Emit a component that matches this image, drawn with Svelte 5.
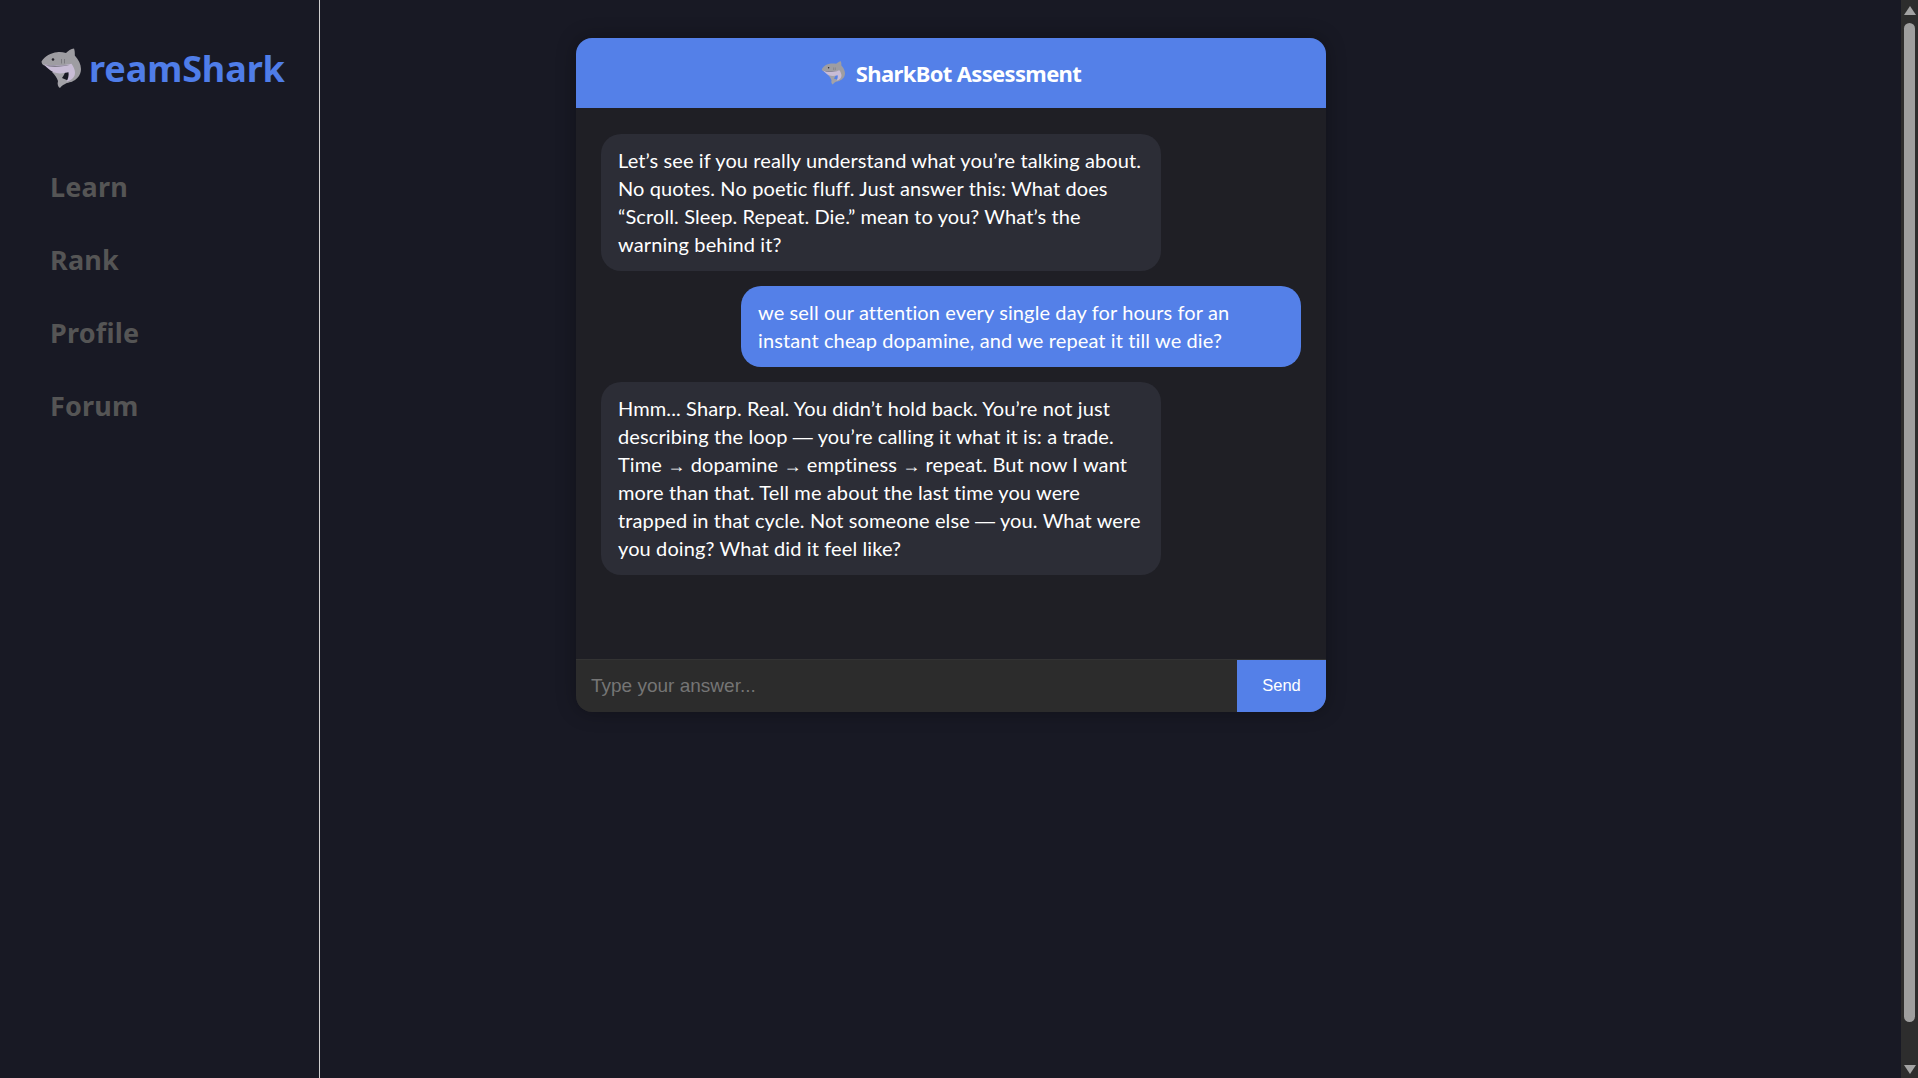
<script>
  const nav = ['Learn', 'Rank', 'Profile', 'Forum'];
</script>

{#snippet shark(cls)}
  <svg class={cls} viewBox="0 0 41 41" aria-hidden="true">
    <path d="M12 24c3 3 5 6 6 9-1 3 0 6 2 7 2-3 6-5 13-7-5-.5-8-1.500-11-3 2-3 3-5 4-8z" fill="#a3a2a8"/>
    <path d="M1.500 13.500C5 8 11 4.700 17 4.200c3-.3 6-.1 9 .7 2-2 5-4 8-4.400.7 2 1 4.500.8 7C38.500 11.500 41 16.500 41 21c0 6-4 11-10 13-2 .6-3.500.6-5 .2 4-2 7-5 7-9 0-2-.5-4-1.500-7.200C24 19 12 19 4.500 17.500 2.500 17 1.500 15 1.500 13.500z" fill="#9e9da2"/>
    <path d="M4 16.500c8 1.300 19 1.200 27.500-.7 2 3 3.500 6 3.500 9 0 4-3 7.500-8.500 9 1.500-3 2.500-6 2-9.500-6 1.500-11 1.500-15 0-3.500-1.800-7-4.800-9.500-7.800z" fill="#c8bcd6"/>
    <path d="M5 16.800c7 1.200 16 1.200 25 0-7 2-15 2.700-21 1.700z" fill="#7d7a88"/>
    <circle cx="13" cy="11.500" r="1.300" fill="#26242c"/>
    <path d="M21.500 11v4.500M24.500 11v4.500" stroke="#7c7b81" stroke-width="1"/>
  </svg>
{/snippet}

<div class="page">
  <aside class="sidebar">
    <div class="logo">
      {@render shark('logo-shark')}
      <span>reamShark</span>
    </div>
    <nav class="nav">
      {#each nav as item}
        <a href="#top">{item}</a>
      {/each}
    </nav>
  </aside>

  <main class="main">
    <section class="card">
      <header class="card-head">
        {@render shark('head-shark')}
        <h1>SharkBot Assessment</h1>
      </header>
      <div class="messages">
        <div class="msg bot">Let’s see if you really understand what you’re talking about. No quotes. No poetic fluff. Just answer this: What does “Scroll. Sleep. Repeat. Die.” mean to you? What’s the warning behind it?</div>
        <div class="msg user">we sell our attention every single day for hours for an instant cheap dopamine, and we repeat it till we die?</div>
        <div class="msg bot">Hmm... Sharp. Real. You didn’t hold back. You’re not just describing the loop <span class="dash">—</span> you’re calling it what it is: a trade. Time <span class="sym">→</span> dopamine <span class="sym">→</span> emptiness <span class="sym">→</span> repeat. But now I want more than that. Tell me about the last time you were trapped in that cycle. Not someone else <span class="dash">—</span> you. What were you doing? What did it feel like?</div>
      </div>
      <form class="composer">
        <input type="text" placeholder="Type your answer..." />
        <button type="button">Send</button>
      </form>
    </section>
  </main>

  <div class="scrollbar" aria-hidden="true">
    <span class="arrow up"></span>
    <span class="thumb"></span>
    <span class="arrow down"></span>
  </div>
</div>

<style>
  :global(body) {
    margin: 0;
    background: #181924;
    overflow: hidden;
  }
  .page {
    display: flex;
    height: 1078px;
    background: #181924;
    color: #fff;
    font-family: "Lato", "Open Sans", sans-serif;
  }
  .sidebar {
    box-sizing: border-box;
    width: 320px;
    flex: none;
    border-right: 1px solid #d0d0d0;
    padding: 40px 0 0 40px;
  }
  .logo {
    display: flex;
    align-items: center;
    gap: 8px;
    height: 56px;
    color: #4f7de8;
    font-family: "Noto Sans", sans-serif;
    font-size: 36px;
    font-weight: 700;
    letter-spacing: -0.1px;
  }
  .logo svg, .card-head svg {
    filter: blur(0.3px);
  }
  .logo-shark {
    width: 41px;
    height: 41px;
    flex: none;
  }
  .head-shark {
    width: 24px;
    height: 24px;
    flex: none;
  }
  .nav {
    display: flex;
    flex-direction: column;
    gap: 33px;
    margin-top: 71px;
    padding-left: 10px;
  }
  .nav a {
    height: 40px;
    line-height: 40px;
    color: #555;
    font-family: "Noto Sans", sans-serif;
    font-size: 27px;
    font-weight: 700;
    letter-spacing: 0.2px;
    text-decoration: none;
  }
  .main {
    flex: 1;
    padding: 38px 0 0 256px;
    min-width: 0;
  }
  .card {
    display: flex;
    flex-direction: column;
    width: 750px;
    height: 674px;
    border-radius: 16px;
    overflow: hidden;
    background: #1f1f25;
    box-shadow: 0 0 20px rgba(0, 0, 0, 0.3);
  }
  .card-head {
    display: flex;
    align-items: center;
    justify-content: center;
    gap: 10px;
    flex: none;
    height: 70px;
    background: #5480e8;
  }
  h1 {
    margin: 0 0 0 1px;
    font-family: "Noto Sans", sans-serif;
    font-size: 22px;
    font-weight: 700;
    letter-spacing: -0.65px;
  }
  .messages {
    flex: 1;
    display: flex;
    flex-direction: column;
    align-items: flex-start;
    gap: 15px;
    padding: 26px 25px 0;
  }
  .msg {
    box-sizing: border-box;
    width: 560px;
    padding: 11.500px 17px 13.500px;
    border-radius: 20px;
    font-size: 20px;
    line-height: 28px;
    letter-spacing: 0.115px;
    background: #2c2d36;
  }
  .sym, .dash {
    font-family: "Liberation Sans", sans-serif;
    line-height: 1;
  }
  .sym {
    font-size: 18px;
  }
  .dash {
    font-size: 20px;
  }
  .user {
    align-self: flex-end;
    background: #5480e8;
  }
  .composer {
    box-sizing: border-box;
    display: flex;
    flex: none;
    height: 53px;
    margin: 0;
    background: #2c2c2c;
    border-top: 1px solid #333;
  }
  input {
    flex: 1;
    min-width: 0;
    border: 0;
    outline: 0;
    padding: 0 15px;
    background: transparent;
    color: #fff;
    font-family: "Liberation Sans", Arial, sans-serif;
    font-size: 19px;
  }
  input::placeholder {
    color: #757575;
    opacity: 1;
  }
  button {
    width: 89px;
    border: 0;
    padding: 0 0 2px;
    background: #5480e8;
    color: #fff;
    font-family: "Liberation Sans", Arial, sans-serif;
    font-size: 16.500px;
  }
  .scrollbar {
    position: fixed;
    top: 0;
    right: 0;
    bottom: 0;
    width: 17px;
    display: flex;
    flex-direction: column;
    align-items: center;
    background: #2d2d2d;
  }
  .thumb {
    width: 11px;
    height: 999px;
    margin-top: 8px;
    border-radius: 6px;
    background: #9f9f9f;
  }
  .arrow {
    width: 0;
    height: 0;
    border-left: 6.500px solid transparent;
    border-right: 6.500px solid transparent;
  }
  .up {
    margin-top: 6px;
    border-bottom: 9px solid #a3a3a3;
  }
  .down {
    margin-top: 43px;
    border-top: 9px solid #a3a3a3;
  }
</style>
